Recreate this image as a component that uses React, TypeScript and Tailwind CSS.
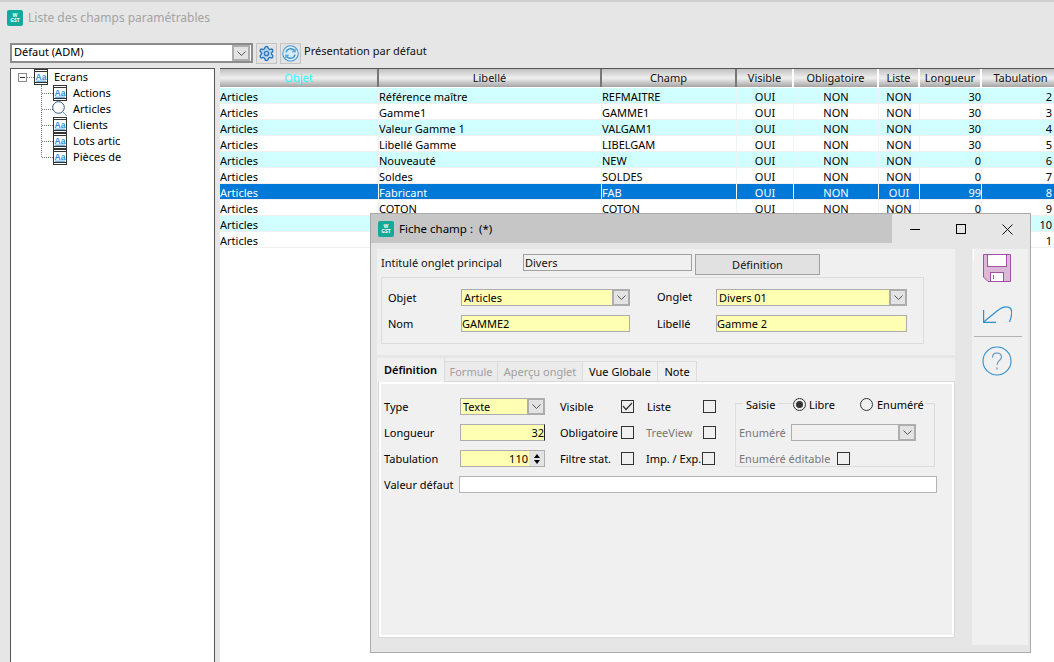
import React from 'react';
import { Settings } from 'lucide-react';

const FONT = "font-['Noto_Sans','Liberation_Sans',sans-serif]";

const rows = [
  ['Articles', 'Référence maître', 'REFMAITRE', 'OUI', 'NON', 'NON', '30', '2'],
  ['Articles', 'Gamme1', 'GAMME1', 'OUI', 'NON', 'NON', '30', '3'],
  ['Articles', 'Valeur Gamme 1', 'VALGAM1', 'OUI', 'NON', 'NON', '30', '4'],
  ['Articles', 'Libellé Gamme', 'LIBELGAM', 'OUI', 'NON', 'NON', '30', '5'],
  ['Articles', 'Nouveauté', 'NEW', 'OUI', 'NON', 'NON', '0', '6'],
  ['Articles', 'Soldes', 'SOLDES', 'OUI', 'NON', 'NON', '0', '7'],
  ['Articles', 'Fabricant', 'FAB', 'OUI', 'NON', 'OUI', '99', '8'],
  ['Articles', 'COTON', 'COTON', 'OUI', 'NON', 'NON', '0', '9'],
  ['Articles', '', '', '', '', '', '', '10'],
  ['Articles', '', '', '', '', '', '', '1'],
];

const columns = [
  { title: 'Objet', cls: 'w-[159px] text-left' },
  { title: 'Libellé', cls: 'w-[223px] text-left' },
  { title: 'Champ', cls: 'w-[135px] text-left' },
  { title: 'Visible', cls: 'w-[57px] text-center' },
  { title: 'Obligatoire', cls: 'w-[85px] text-center' },
  { title: 'Liste', cls: 'w-[41px] text-center' },
  { title: 'Longueur', cls: 'w-[62px] text-right' },
  { title: 'Tabulation', cls: 'w-[76px] text-right' },
];

function Logo() {
  return (
    <div className="flex h-4 w-4 shrink-0 flex-col items-center justify-center rounded-[2px] bg-[#14a99a] text-[5px] font-bold leading-[5px] text-white">
      <span>W</span>
      <span>GST</span>
    </div>
  );
}

function Chevron() {
  return (
    <svg width="9" height="5" viewBox="0 0 9 5" fill="none" stroke="#555">
      <path d="M0.5 0.5 L4.5 4.5 L8.5 0.5" />
    </svg>
  );
}

function DropButton() {
  return (
    <div className="-my-px -mr-px flex w-[18px] shrink-0 items-center justify-center self-stretch border-2 border-[#adadad] bg-[#e3e3e3]">
      <Chevron />
    </div>
  );
}

function AaIcon() {
  return (
    <svg width="14" height="16" viewBox="0 0 14 16" className="shrink-0">
      <rect x="0.5" y="0.5" width="13" height="15" fill="#fff" stroke="#333" />
      <path d="M0.5 2.5 H13.5 M0.5 13.5 H13.5" stroke="#333" />
      <text x="1.5" y="10.5" fontSize="8.5" fontWeight="bold" fill="#2f8fd6" fontFamily="Liberation Sans">Aa</text>
      <path d="M2 12.2 H12" stroke="#2f8fd6" />
    </svg>
  );
}

function SearchIcon() {
  return (
    <svg width="16" height="16" viewBox="0 0 16 16" fill="none" className="-ml-px -mr-px shrink-0">
      <circle cx="6.5" cy="6.5" r="5.8" stroke="#2a5a7a" />
      <path d="M10.8 11 L15 15" stroke="#5a90b5" />
    </svg>
  );
}

function TreeItem({ label, search }: { label: string; search?: boolean }) {
  return (
    <div className="flex h-4 items-center">
      <div className="w-[11px] border-t border-dotted border-[#777]" />
      {search ? <SearchIcon /> : <AaIcon />}
      <span className="ml-[6px] pb-px text-black">{label}</span>
    </div>
  );
}

function Check({ checked }: { checked?: boolean }) {
  return (
    <div className="flex h-[13px] w-[13px] shrink-0 items-center justify-center border border-[#333] bg-[#f0f0f0]">
      {checked && (
        <svg width="11" height="9" viewBox="0 0 11 9" fill="none" stroke="#333" strokeWidth="1.2">
          <path d="M1 4 L4 7.5 L10 1" />
        </svg>
      )}
    </div>
  );
}

function Radio({ on }: { on?: boolean }) {
  return (
    <div className="flex h-[13px] w-[13px] shrink-0 items-center justify-center rounded-full border border-[#333] bg-[#f0f0f0]">
      {on && <div className="h-[7px] w-[7px] rounded-full bg-[#333]" />}
    </div>
  );
}

function Dialog() {
  return (
    <div className="absolute left-[370px] top-[213px] flex h-[440px] w-[661px] flex-col border border-[#a9a9a9] bg-[#e6e6e6]">
      {/* title bar */}
      <div className="flex h-[29px] shrink-0">
        <div className="flex w-[521px] items-center gap-[5px] bg-[#c6c6c6] pl-[7px] text-[11.5px] text-black">
          <Logo />
          <span>Fiche champ :&nbsp; (*)</span>
        </div>
        <div className="relative flex-1">
          <div className="absolute left-[18px] top-[15px] h-px w-[10px] bg-black" />
          <div className="absolute left-[64px] top-[10px] h-[10px] w-[10px] border border-black" />
          <svg width="11" height="11" viewBox="0 0 11 11" className="absolute left-[110px] top-[10px]" stroke="#111">
            <path d="M0.5 0.5 L10.5 10.5 M10.5 0.5 L0.5 10.5" />
          </svg>
        </div>
      </div>

      <div className="flex items-start pl-[6px] pt-[6px]">
        {/* main area */}
        <div className="flex h-[389px] w-[578px] flex-col bg-[#f0f0f0]">
          <div className="flex items-start pl-[4px] pt-[5px] text-[#111]">
            <span className="flex h-[17px] w-[142px] items-center">Intitulé onglet principal</span>
            <div className="flex h-[17px] w-[169px] items-center border border-[#a0a0a0] pl-[1px]">Divers</div>
            <div className="ml-[3px] flex h-[21px] w-[125px] items-center justify-center border border-[#a0a0a0] bg-[#e1e1e1]">Définition</div>
          </div>
          <div className="ml-[4px] mt-[2px] flex h-[67px] w-[543px] flex-col gap-[9px] border border-[#dcdcdc] pl-[6px] pt-[11px]">
            <div className="flex h-[17px] items-center">
              <span className="w-[73px]">Objet</span>
              <div className="flex h-[17px] w-[169px] items-center border border-[#adadad] bg-[#ffffb4] pl-[2px]">
                <span className="flex-1">Articles</span>
                <DropButton />
              </div>
              <span className="ml-[27px] w-[59px] pb-[2px]">Onglet</span>
              <div className="flex h-[17px] w-[191px] items-center border border-[#adadad] bg-[#ffffb4] pl-[2px]">
                <span className="flex-1">Divers 01</span>
                <DropButton />
              </div>
            </div>
            <div className="flex h-[17px] items-center">
              <span className="w-[73px]">Nom</span>
              <div className="flex h-[17px] w-[169px] items-center border border-[#adadad] bg-[#ffffb4]">GAMME2</div>
              <span className="ml-[27px] w-[59px]">Libellé</span>
              <div className="flex h-[17px] w-[191px] items-center border border-[#adadad] bg-[#ffffb4]">Gamme 2</div>
            </div>
          </div>
          <div className="mt-[11px] h-[3px] shrink-0 bg-[#e6e6e6]" />

          {/* tabs */}
          <div className="flex h-[23px] shrink-0 items-start">
            <div className="relative z-10 flex h-[24px] w-[68px] items-center justify-center border-r border-[#dcdcdc] bg-[#f0f0f0] pb-[2px] font-semibold text-black">Définition</div>
            <div className="mt-[3px] flex h-[20px] w-[53px] items-center justify-center border-t border-r border-[#dcdcdc] bg-[#ebebeb] pb-px text-[#a0a0a0]">Formule</div>
            <div className="mt-[3px] flex h-[20px] w-[85px] items-center justify-center border-t border-r border-[#dcdcdc] bg-[#ebebeb] pb-px text-[#a0a0a0]">Aperçu onglet</div>
            <div className="mt-[3px] flex h-[20px] w-[75px] items-center justify-center border-t border-r border-[#dcdcdc] bg-[#f0f0f0] pb-px">Vue Globale</div>
            <div className="mt-[3px] flex h-[20px] w-[39px] items-center justify-center border-t border-r border-[#dcdcdc] bg-[#f0f0f0] pb-px">Note</div>
          </div>

          <div className="ml-px flex-1 border border-[#d8d8d8]">
            <div className="h-full border-2 border-white pl-[3px] pt-[14px]">
              <div className="flex flex-col gap-[9px]">
                <div className="flex h-[17px] items-center">
                  <span className="w-[76px]">Type</span>
                  <div className="flex h-[17px] w-[85px] items-center border border-[#adadad] bg-[#ffffb4] pl-[2px]">
                    <span className="flex-1 pb-px">Texte</span>
                    <DropButton />
                  </div>
                  <span className="ml-[15px] w-[61px]">Visible</span>
                  <Check checked />
                  <span className="ml-[13px] w-[56px]">Liste</span>
                  <Check />
                  <div className="relative ml-[19px] h-[17px] w-[200px]">
                    <div className="absolute left-0 top-[5px] h-[64px] w-[200px] border border-[#dcdcdc]" />
                    <div className="absolute left-[8px] top-[-2px] flex h-[16px] items-center bg-[#f0f0f0] px-[3px]">Saisie</div>
                    <div className="absolute left-[58px] top-0 flex h-[13px] w-[67px] items-center gap-[3px] bg-[#f0f0f0]">
                      <Radio on />
                      <span>Libre</span>
                    </div>
                    <div className="absolute left-[125px] top-0 flex h-[13px] w-[65px] items-center gap-[4px] bg-[#f0f0f0]">
                      <Radio />
                      <span>Enuméré</span>
                    </div>
                  </div>
                </div>
                <div className="flex h-[17px] items-center">
                  <span className="w-[76px]">Longueur</span>
                  <div className="flex h-[17px] w-[85px] items-center justify-end border border-[#adadad] border-r-[#222] bg-[#ffffb4]">32</div>
                  <span className="ml-[15px] w-[61px]">Obligatoire</span>
                  <Check />
                  <span className="ml-[12px] w-[57px] text-[#777]">TreeView</span>
                  <Check />
                  <div className="ml-[23px] flex items-center text-[#777]">
                    <span className="w-[52px]">Enuméré</span>
                    <div className="flex h-[17px] w-[125px] items-center border border-[#adadad]">
                      <span className="flex-1" />
                      <DropButton />
                    </div>
                  </div>
                </div>
                <div className="flex h-[17px] items-center">
                  <span className="w-[76px]">Tabulation</span>
                  <div className="flex h-[17px] w-[85px] items-center border border-[#adadad] bg-[#ffffb4]">
                    <span className="flex-1 text-right">110</span>
                    <div className="ml-[1px] flex w-[15px] flex-col items-center justify-center gap-[2px] self-stretch bg-[#e3e3e3]">
                      <div className="h-0 w-0 border-x-[3px] border-b-[4px] border-x-transparent border-b-black" />
                      <div className="h-0 w-0 border-x-[3px] border-t-[4px] border-x-transparent border-t-black" />
                    </div>
                  </div>
                  <span className="ml-[15px] w-[61px]">Filtre stat.</span>
                  <Check />
                  <span className="ml-[12px] w-[56px]">Imp. / Exp.</span>
                  <Check />
                  <div className="ml-[24px] flex items-center text-[#777]">
                    <span className="w-[98px]">Enuméré éditable</span>
                    <Check />
                  </div>
                </div>
                <div className="flex h-[17px] items-center">
                  <span className="w-[75px]">Valeur défaut</span>
                  <div className="h-[17px] w-[478px] border border-[#b4b4b4] bg-white" />
                </div>
              </div>
            </div>
          </div>
        </div>

        {/* toolbar */}
        <div className="relative ml-[17px] flex h-[396px] w-[56px] flex-col items-start bg-[#f0f0f0] pl-[11px] pt-[5px]">
          <div className="absolute left-px top-0 h-[11px] w-px bg-white" />
          <svg width="28" height="28" viewBox="0 0 28 28">
            <path d="M0.5 0.5 H27.5 V27.5 H5 L0.5 23 Z" fill="#dcb8d8" stroke="#a54fa5" />
            <rect x="4.5" y="0.5" width="19" height="12" fill="#fff" stroke="#a54fa5" />
            <rect x="7.5" y="18.5" width="13" height="9" fill="#fff" stroke="#a54fa5" />
            <path d="M10.5 21 V25" stroke="#a54fa5" />
          </svg>
          <svg width="29" height="17" viewBox="0 0 29 17" fill="none" stroke="#2e8fd0" strokeWidth="1.2" className="mt-[24px]">
            <path d="M0.6 16 L14 5 C19 1 24 0 27 2 C29.5 4 28.8 10 26.5 16" />
            <path d="M0.6 4 V16.4 H13" />
          </svg>
          <div className="-ml-[9px] mt-[13px] h-px w-[48px] bg-[#b4b4b4]" />
          <svg width="30" height="30" viewBox="0 0 30 30" fill="none" stroke="#2e8fd0" strokeWidth="1.1" className="-ml-px mt-[9px]">
            <circle cx="15" cy="15" r="14" />
            <path d="M10.5 11.5 C10.5 5.5 19.5 5.5 19.5 11 C19.5 14.5 15 14.5 15 19" stroke="#5a8fb5" />
            <path d="M15 21.5 V23.5" stroke="#5a8fb5" />
          </svg>
        </div>
      </div>
    </div>
  );
}

export default function App() {
  return (
    <div className={`${FONT} relative flex h-[662px] w-[1054px] flex-col overflow-hidden bg-[#e6e6e6] text-[11px] leading-none text-black`}>
      <div className="h-[2px] bg-[#cfcfcf]" />
      <div className="flex h-[32px] items-center gap-[5px] pl-[7px] text-[12px] text-[#a3a3a3]">
        <Logo />
        <span>Liste des champs paramétrables</span>
      </div>

      {/* toolbar */}
      <div className="flex h-[34px] items-start pl-[10px] pt-[9px]">
        <div className="flex h-[20px] w-[243px] items-center border-2 border-[#8c8c8c] bg-white pl-[2px]">
          <span className="flex-1 pb-[3px]">Défaut (ADM)</span>
          <div className="mr-[2px] flex self-stretch py-px">
            <DropButton />
          </div>
        </div>
        <div className="ml-[3px] flex h-[21px] w-[21px] items-center justify-center border border-[#c4c4c4] bg-[#e3e3e3]">
          <Settings size={17} strokeWidth={2} color="#2f78c0" fill="#bcd7f0" />
        </div>
        <div className="ml-[3px] flex h-[21px] w-[21px] items-center justify-center border border-[#c4c4c4] bg-[#e3e3e3]">
          <svg width="17" height="17" viewBox="0 0 16 16" fill="none">
            <circle cx="8" cy="8" r="7.3" fill="#d8ecf8" stroke="#4a9bd4" />
            <path d="M3.8 7 A4.3 4.3 0 0 1 11.5 5.3 M12.2 9 A4.3 4.3 0 0 1 4.5 10.7" stroke="#3d8fcc" strokeWidth="1.3" />
            <path d="M12.3 3.5 V6.3 H9.6 M3.7 12.5 V9.7 H6.4" stroke="#3d8fcc" />
          </svg>
        </div>
        <span className="ml-[3px] mt-[2px] text-[#111]">Présentation par défaut</span>
      </div>

      <div className="flex flex-1 pl-[10px]">
        {/* tree */}
        <div className="w-[205px] border border-b-0 border-[#555] bg-white">
          <div className="flex h-4 items-center pl-[7px]">
            <div className="flex h-[9px] w-[9px] items-center justify-center border border-[#888]">
              <div className="h-px w-[5px] bg-[#333]" />
            </div>
            <div className="w-[7px] border-t border-dotted border-[#777]" />
            <AaIcon />
            <span className="ml-[6px] pb-px">Ecrans</span>
          </div>
          <div className="ml-[30px] h-[72px] w-fit border-l border-dotted border-[#777]">
            <TreeItem label="Actions" />
            <TreeItem label="Articles" search />
            <TreeItem label="Clients" />
            <TreeItem label="Lots artic" />
            <TreeItem label="Pièces de" />
          </div>
        </div>

        {/* grid */}
        <div className="ml-[5px] min-w-0 flex-1 overflow-hidden border-t border-[#555] bg-white">
          <div className="flex h-[19px] border-b border-white bg-gradient-to-b from-[#c0c0c0] via-[#f0f0f0] to-[#a4a4a4]">
            {columns.map((c, i) => (
              <div
                key={c.title}
                className={`flex shrink-0 items-center justify-center border-r-2 pb-px ${i === 7 ? 'pl-[3px]' : ''} ${i < 3 ? 'border-[#777]' : 'border-white'} ${c.cls} ${i === 0 ? 'text-[#2ff]' : 'text-[#111]'}`}
              >
                {c.title}
              </div>
            ))}
          </div>
          {rows.map((r, ri) => (
            <div
              key={ri}
              className={`flex h-4 border-b border-[#f0f0f0] ${ri === 6 ? 'bg-[#0078d7] text-white' : ri % 2 === 0 ? 'bg-[#d1ffff]' : 'bg-white'}`}
            >
              {r.map((v, i) => (
                <div
                  key={i}
                  className={`${columns[i].cls} ${i === 7 ? 'pr-[5px]' : ''} shrink-0 border-r pt-[3px] ${ri === 6 ? 'border-white' : 'border-[#eef4f4]'}`}
                >
                  {v}
                </div>
              ))}
            </div>
          ))}
        </div>
      </div>

      <Dialog />
    </div>
  );
}
